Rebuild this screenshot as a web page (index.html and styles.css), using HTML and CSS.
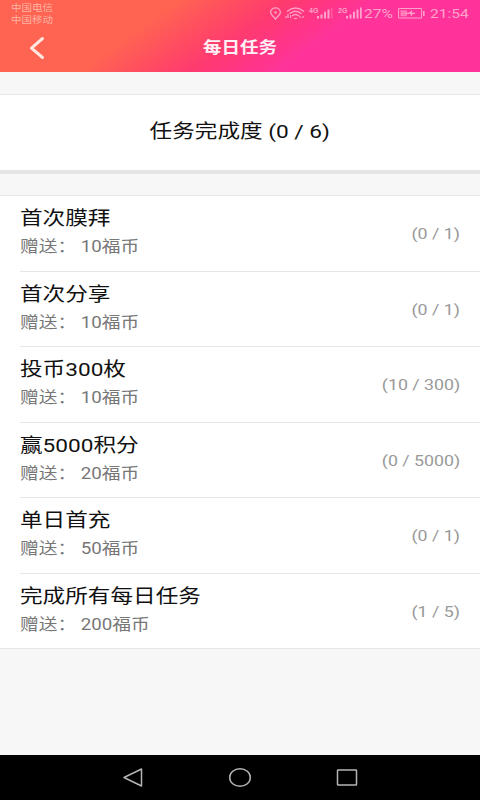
FILE: index.html
```html
<!DOCTYPE html>
<html lang="zh-CN">
<head>
<meta charset="utf-8">
<title>每日任务</title>
<link rel="stylesheet" href="styles.css">
</head>
<body>
<header class="top">
  <div class="status">
    <div class="carriers"><span>中国电信</span><span>中国移动</span></div>
    <svg class="status-icons" width="98" height="24" viewBox="0 0 98 24" fill="none" stroke="currentColor">
      <path d="M5.500 19C3 15.500.6 15 .6 12.300A4.900 4.500 0 0 1 10.400 12.300C10.400 15 8 15.500 5.500 19Z" stroke-width="1.300"/>
      <circle cx="5.500" cy="12.500" r="1.200" fill="currentColor" stroke="none"/>
      <path d="M17 11.500Q25.500 4.500 34 11.500M19.500 13.800Q25.500 8.800 31.500 13.800M22 16Q25.500 13 29 16" stroke-width="1.400"/>
      <path d="M16 18v-2M18 18v-4M20.500 18v-3M24 18.500h3M30 18v-2M33 18v-2" stroke-width="1.200"/>
      <g fill="currentColor" stroke="none">
        <text class="net" x="39" y="12.500">4G</text><text class="net" x="68" y="12.500">2G</text>
        <path d="M47 16h2v2.500h-2zM50.500 14.500h2v4h-2zM54 11.800h2v6.700h-2zM57.500 9.500h2v9h-2zM76 16h2v2.500h-2zM79.500 14.500h2v4h-2zM83 11.800h2v6.700h-2zM86.500 9.500h2v9h-2zM90 7.500h1.800v11h-1.800z"/>
        <path d="M61 8h1.500v10.500H61z" opacity=".35"/>
      </g>
    </svg>
    <span class="percent"><b>27%</b></span>
    <svg class="battery" width="28" height="24" viewBox="0 0 28 24" fill="none" stroke="currentColor">
      <path d="M.6 8.500h23v9.500H.6z"/>
      <path d="M2.500 10.300h6.500v6H2.500z" fill="currentColor" stroke="none" opacity=".65"/>
      <path d="M8 13.300h9" stroke-width="1.200"/>
      <path d="M11 13.300 13.500 10.500v2.500h2L13 16v-2.700Z" fill="currentColor" stroke-width=".5"/>
      <path d="M25.800 11v5" stroke-width="1.500"/>
    </svg>
    <span class="clock"><b>21:54</b></span>
  </div>
  <div class="titlebar">
    <svg class="back" width="16" height="24" viewBox="0 0 16 24" fill="none" stroke="currentColor" stroke-width="3" stroke-linecap="round" stroke-linejoin="round"><path d="M13.500 2.500 2.500 12.200 13.500 21.500"/></svg>
    <h1>每日任务</h1>
  </div>
</header>
<section class="progress"><span>任务完成度 (0 / 6)</span></section>
<ul class="tasks">
  <li><div class="info"><h2>首次膜拜</h2><p>赠送： 10福币</p></div><span class="count">(0 / 1)</span></li>
  <li><div class="info"><h2>首次分享</h2><p>赠送： 10福币</p></div><span class="count">(0 / 1)</span></li>
  <li><div class="info"><h2>投币300枚</h2><p>赠送： 10福币</p></div><span class="count">(10 / 300)</span></li>
  <li><div class="info"><h2>赢5000积分</h2><p>赠送： 20福币</p></div><span class="count">(0 / 5000)</span></li>
  <li><div class="info"><h2>单日首充</h2><p>赠送： 50福币</p></div><span class="count">(0 / 1)</span></li>
  <li><div class="info"><h2>完成所有每日任务</h2><p>赠送： 200福币</p></div><span class="count">(1 / 5)</span></li>
</ul>
<nav class="navbar">
  <svg width="22" height="22" viewBox="0 0 22 22"><path d="M2 10.500 19.500 2v17Z"/></svg>
  <svg width="24" height="22" viewBox="0 0 24 22"><ellipse cx="12" cy="10.500" rx="10.300" ry="8.800"/></svg>
  <svg width="22" height="22" viewBox="0 0 22 22"><rect x="1.500" y="3" width="19" height="15" rx=".5"/></svg>
</nav>
</body>
</html>
```
FILE: styles.css
```css
* { box-sizing: border-box; margin: 0; padding: 0; }
body {
  width: 480px;
  height: 800px;
  display: flex;
  flex-direction: column;
  overflow: hidden;
  background: #f7f7f7;
  color: #111;
  font-family: Roboto, "Noto Sans CJK SC", sans-serif;
}
.top {
  height: 72px;
  flex: none;
  background: linear-gradient(144deg, #ff6352 31%, #ff4b62 42%, #ff3a70 50%, #ff3399 65%);
}
.status {
  height: 24px;
  display: flex;
  padding-left: 11px;
  color: #ffa3cb;
}
.carriers {
  width: 259px;
  padding-top: 2px;
  display: flex;
  flex-direction: column;
  color: #ffb4a4;
  font-size: 9px;
  line-height: 12px;
}
.carriers span { transform: scaleX(1.17); transform-origin: left; }
.status-icons, .battery { flex: none; }
.net { font: bold 7px "Liberation Sans", sans-serif; }
.percent, .clock { font-size: 13.500px; line-height: 27px; }
.percent { width: 30px; margin-left: -4px; }
.battery { margin-left: 4px; }
.clock { margin-left: 4px; }
.percent b, .clock b {
  display: inline-block;
  font-weight: 400;
  transform: scaleX(1.15);
  transform-origin: left;
}
.titlebar {
  height: 48px;
  display: grid;
  grid-template-columns: 60px 1fr 60px;
  align-items: center;
  color: #fff0f5;
}
.back { margin-left: 29px; color: #ffe6df; }
h1 {
  font-size: 15.700px;
  line-height: 24px;
  font-weight: 700;
  text-align: center;
  transform: scaleX(1.180);
}
.progress {
  height: 80px;
  flex: none;
  margin-top: 22px;
  border-top: 1px solid #e6e6e6;
  border-bottom: 4px solid #e5e5e5;
  background: #fff;
  text-align: center;
  font-size: 19px;
  line-height: 73px;
}
.progress span { display: inline-block; transform: scaleX(1.190); }
.tasks {
  flex: none;
  margin-top: 21px;
  border-top: 1px solid #e6e6e6;
  border-bottom: 1px solid #e6e6e6;
  padding-left: 20px;
  background: #fff;
  list-style: none;
}
.tasks li {
  height: 75.500px;
  display: flex;
  justify-content: space-between;
  align-items: center;
  padding-top: 2px;
  padding-right: 20px;
  border-bottom: 1px solid #e6e6e6;
}
.tasks li:last-child { height: 74.500px; border-bottom: 0; }
.info { padding-bottom: 2px; }
h2, .tasks p { font-weight: 400; transform: scaleX(1.184); transform-origin: left; white-space: nowrap; }
h2 { font-size: 19px; line-height: 28px; transform: scaleX(1.190); }
.tasks p { font-size: 15.800px; line-height: 28px; color: #777; }
.count {
  font-size: 15px;
  color: #999;
  transform: scaleX(1.184);
  transform-origin: right;
}
.navbar {
  height: 45px;
  margin-top: auto;
  padding: 0 122px;
  display: flex;
  justify-content: space-between;
  align-items: center;
  background: #000;
}
.navbar svg { fill: none; stroke: #b5b5b5; stroke-width: 1.500; stroke-linejoin: round; }
```
